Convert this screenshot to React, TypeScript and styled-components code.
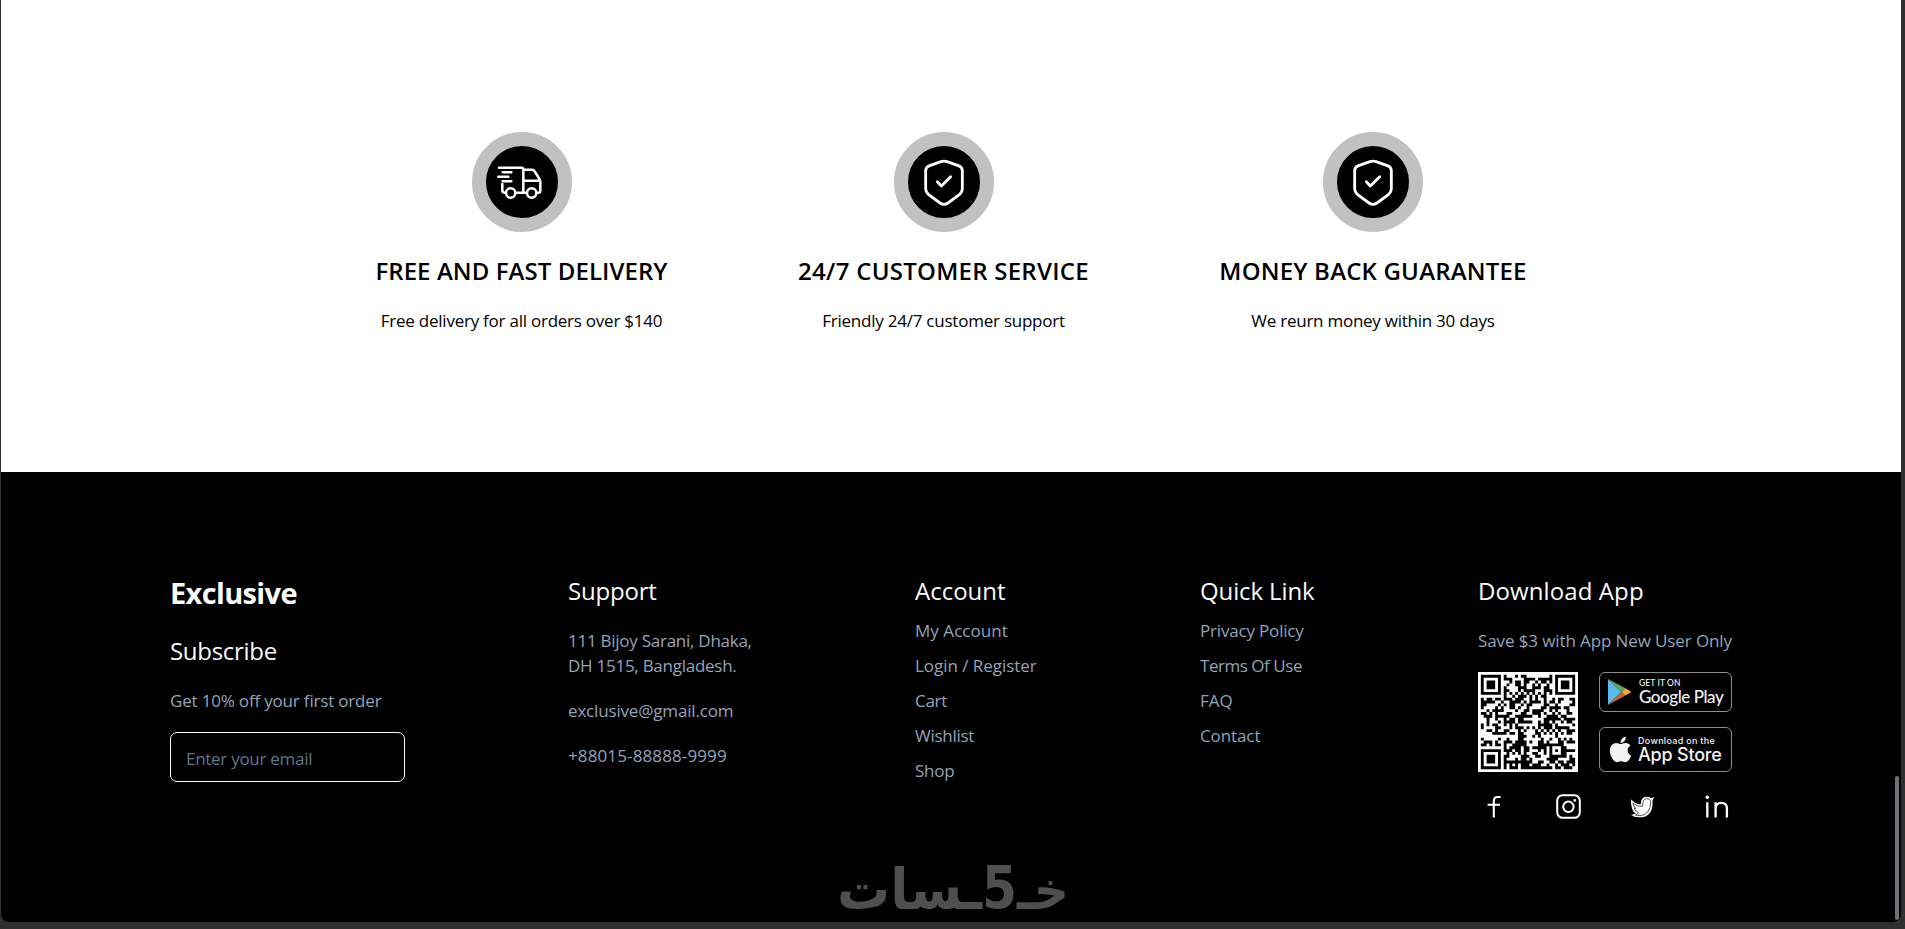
import React from "react";
import styled, { createGlobalStyle } from "styled-components";
import { FaApple } from "react-icons/fa";

const GlobalStyle = createGlobalStyle`
    * {
        box-sizing: border-box;
    }
    body {
        margin: 0;
        background-color: #2f2f2f;
        font-family: "Open Sans", "Noto Sans", sans-serif;
        overflow: hidden;
    }
    h2, h3, p, ul {
        margin: 0;
        padding: 0;
    }
`;

const Frame = styled.div`
    height: 929px;
    padding: 0 4px 7px 1px;
    background-color: #2f2f2f;
`;

const Page = styled.div`
    position: relative;
    height: 922px;
    display: flex;
    flex-direction: column;
    background-color: black;
    border-radius: 0 0 8px 8px;
    overflow: hidden;
`;

const Features = styled.section`
    height: 472px;
    padding-top: 132px;
    display: flex;
    justify-content: center;
    gap: 130px;
    background-color: white;
    color: black;
`;

const Feature = styled.article<{ $width: number }>`
    width: ${(props) => props.$width}px;
    display: flex;
    flex-direction: column;
    align-items: center;
`;

const Badge = styled.div`
    width: 100px;
    height: 100px;
    margin-bottom: 23px;
    display: flex;
    justify-content: center;
    align-items: center;
    border: 14px solid #c1c1c1;
    border-radius: 50%;
    background-color: black;
`;

interface TextProps {
    $tracking?: number;
}

const FeatureTitle = styled.h3<TextProps>`
    margin-bottom: 21px;
    font-size: 24px;
    line-height: 32px;
    font-weight: 600;
    white-space: nowrap;
    letter-spacing: ${(props) => props.$tracking ?? 0}px;
`;

const FeatureText = styled.p<TextProps>`
    font-size: 17px;
    line-height: 25px;
    white-space: nowrap;
    letter-spacing: ${(props) => props.$tracking ?? 0}px;
`;

const Footer = styled.footer`
    flex: 1;
    padding: 103px 169px 0;
    display: flex;
    justify-content: space-between;
    align-items: flex-start;
    color: #fafafa;
`;

const Column = styled.div<{ $width: number }>`
    width: ${(props) => props.$width}px;
    display: flex;
    flex-direction: column;
`;

const Brand = styled.h2`
    margin-bottom: 24px;
    font-size: 29px;
    line-height: 36px;
    font-weight: 700;
    letter-spacing: -0.65px;
`;

const Heading = styled.h3<TextProps>`
    font-size: 24px;
    line-height: 32px;
    font-weight: 400;
    white-space: nowrap;
    letter-spacing: ${(props) => props.$tracking ?? 0}px;
`;

const Text = styled.p<TextProps & { $top?: number }>`
    margin-top: ${(props) => props.$top ?? 0}px;
    color: #94a3b8;
    font-size: 17px;
    line-height: 25px;
    white-space: nowrap;
    letter-spacing: ${(props) => props.$tracking ?? 0}px;
`;

const EmailInput = styled.input`
    width: 235px;
    height: 50px;
    margin-top: 19px;
    padding: 2px 15px 0;
    border: 1px solid #fafafa;
    border-radius: 7px;
    background-color: transparent;
    color: #fafafa;
    font-family: inherit;
    font-size: 17px;
    letter-spacing: -0.28px;
    outline: none;
    &::placeholder {
        color: #64748b;
        opacity: 1;
    }
`;

const LinkList = styled.ul`
    margin-top: 11px;
    display: flex;
    flex-direction: column;
    gap: 10px;
    list-style: none;
`;

const AppRow = styled.div`
    height: 100px;
    margin-top: 19px;
    display: flex;
    justify-content: space-between;
`;

const Stores = styled.div`
    display: flex;
    flex-direction: column;
    justify-content: space-between;
`;

const Store = styled.div<{ $height: number; $indent: number }>`
    width: 133px;
    height: ${(props) => props.$height}px;
    padding-left: ${(props) => props.$indent}px;
    display: flex;
    align-items: center;
    border: 1px solid #8d8d8d;
    border-radius: 6px;
    background-color: black;
    color: #f2f2f2;
`;

const StoreIcon = styled.span`
    width: 32px;
    display: flex;
    align-items: center;
`;

const StoreLabel = styled.div<{ $font: string }>`
    display: flex;
    flex-direction: column;
    font-family: ${(props) => props.$font}, sans-serif;
    white-space: nowrap;
`;

const StoreText = styled.span<{ $size: number; $line: number; $tracking: number }>`
    font-size: ${(props) => props.$size}px;
    line-height: ${(props) => props.$line}px;
    font-weight: 500;
    letter-spacing: ${(props) => props.$tracking}px;
`;

const Socials = styled.div`
    margin-top: 22px;
    padding: 0 2px 0 3px;
    display: flex;
    justify-content: space-between;
    align-items: center;
`;

const Social = styled.span`
    width: 25px;
    height: 25px;
    display: flex;
    justify-content: center;
    align-items: center;
`;

const Watermark = styled.svg`
    position: absolute;
    left: 833px;
    top: 856px;
`;

const ScrollThumb = styled.div`
    position: absolute;
    right: 2px;
    top: 776px;
    width: 4px;
    height: 144px;
    border-radius: 2px;
    background-color: #6e7276;
`;

// the speed lines hang out on the left, so the body is nudged off centre
const TruckIcon = () => (
    <svg width="49" height="33" viewBox="412 136 147 99" fill="none" stroke="white" strokeWidth="7.5" strokeLinecap="round" strokeLinejoin="round">
        <path d="M418 141H485Q491 141 491 147V215" />
        <path d="M429 155H455M416 168.5H446M429 182H455" />
        <path d="M428 190V209Q428 216 435 216H438M468 216H501" />
        <path d="M492 147H517Q522 147 525 152L540 176Q542 180 542 184V210Q542 216 536 216H532M493 180H540" />
        <circle cx="453" cy="217" r="14" />
        <circle cx="516" cy="217" r="14" />
    </svg>
);

const ShieldIcon = () => (
    <svg width="40" height="47" viewBox="432 115 120 141" fill="none" stroke="white" strokeWidth="8.5" strokeLinecap="round" strokeLinejoin="round">
        <path d="M483 123L449 135Q437 139 437 151V205Q437 214 445 221L480 247Q492 255 504 247L539 221Q547 214 547 205V151Q547 139 535 135L501 123Q492 120 483 123Z" />
        <path d="M472 183L484 196L512 168" />
    </svg>
);

const PlayIcon = () => (
    <svg width="25" height="28" viewBox="0 0 25 28">
        <path d="M1 1V27L14.5 14Z" fill="#5cb8ea" />
        <path d="M1 1L18.5 10.2L14.5 14Z" fill="#62a763" />
        <path d="M1 27L18.5 17.6L14.5 14Z" fill="#c8642f" />
        <path d="M18.5 10.2L24.5 14L18.5 17.6L14.5 14Z" fill="#f2a43c" />
    </svg>
);

const FacebookIcon = () => (
    <svg width="14" height="23" viewBox="0 0 14 23" fill="none" stroke="white" strokeWidth="2.1">
        <path d="M6.8 22.5V6.2Q6.8 2 10.6 2H13.6M.6 9.8H13" />
    </svg>
);

const InstagramIcon = () => (
    <svg width="25" height="25" viewBox="0 0 25 25" fill="none" stroke="white" strokeWidth="2">
        <rect x="1.2" y="1.2" width="22.6" height="22.6" rx="5.5" />
        <circle cx="12.4" cy="12.8" r="5.2" />
        <circle cx="18.8" cy="6.4" r="1.4" fill="white" stroke="none" />
    </svg>
);

const TwitterIcon = () => (
    <svg width="25" height="22" viewBox="120 410 74 66">
        <path
            d="M123 420Q134 435 152 435Q151 413 170 412Q178 412 182 416L192 414L187 424Q190 474 147 474Q132 474 122 466Q132 466 137 462Q128 458 126 448Q121 437 123 420Z"
            fill="white"
        />
        <path
            d="M128 432Q140 442 158 441Q156 420 169 418Q178 417 182 425Q181 467 150 469Q141 469 136 467Q143 464 145 460Q135 456 132 446L137 447Q130 441 128 432Z"
            fill="none"
            stroke="black"
            strokeWidth="2"
        />
    </svg>
);

const LinkedinIcon = () => (
    <svg width="24" height="23" viewBox="0 0 24 23" fill="none" stroke="white" strokeWidth="2.3">
        <path d="M2.3 7.3V22.6M10.6 7.3V22.6M10.6 14Q10.6 7.9 16.4 7.9Q21.9 7.9 21.9 13.6V22.6" />
        <circle cx="2.3" cy="2.3" r="1.8" fill="white" stroke="none" />
    </svg>
);

const QR_SIZE = 33;

// finder patterns sit in three corners, each with a one-module light margin
const finderModule = (x: number, y: number): boolean | null => {
    const corners = [[0, 0], [QR_SIZE - 7, 0], [0, QR_SIZE - 7]];
    for (const [cx, cy] of corners) {
        const dx = Math.abs(x - cx - 3);
        const dy = Math.abs(y - cy - 3);
        const ring = Math.max(dx, dy);
        if (ring <= 4) return ring !== 4 && ring !== 2;
    }
    return null;
};

const buildQr = () => {
    let seed = 1515;
    let path = "";
    for (let y = 0; y < QR_SIZE; y++) {
        for (let x = 0; x < QR_SIZE; x++) {
            seed = (seed * 1103515245 + 12345) % 2147483648;
            let dark = (seed >> 16) % 100 < 51;
            if (x === 6) dark = y % 2 === 0;
            if (y === 6) dark = x % 2 === 0;
            const ring = Math.max(Math.abs(x - 26), Math.abs(y - 26));
            if (ring <= 2) dark = ring !== 1;
            const finder = finderModule(x, y);
            if (finder !== null) dark = finder;
            if (dark) path += `M${x + 1} ${y + 1}h1v1h-1z`;
        }
    }
    return path;
};

const QrCode = () => (
    <svg width="100" height="100" viewBox="0 0 35 35">
        <rect width="35" height="35" fill="white" />
        <path d={buildQr()} fill="black" />
    </svg>
);

interface LinkInterface {
    label: string,
    tracking: number
}

const features = [
    { title: "FREE AND FAST DELIVERY", text: "Free delivery for all orders over $140", width: 292, titleTracking: 0.08, textTracking: -0.24, icon: <TruckIcon /> },
    { title: "24/7 CUSTOMER SERVICE", text: "Friendly 24/7 customer support", width: 292, titleTracking: 0.26, textTracking: -0.23, icon: <ShieldIcon /> },
    { title: "MONEY BACK GUARANTEE", text: "We reurn money within 30 days", width: 307, titleTracking: 0.19, textTracking: -0.25, icon: <ShieldIcon /> },
];

const accountLinks: LinkInterface[] = [
    { label: "My Account", tracking: 0.05 },
    { label: "Login / Register", tracking: -0.04 },
    { label: "Cart", tracking: -0.29 },
    { label: "Wishlist", tracking: -0.28 },
    { label: "Shop", tracking: -0.2 },
];

const quickLinks: LinkInterface[] = [
    { label: "Privacy Policy", tracking: -0.18 },
    { label: "Terms Of Use", tracking: -0.46 },
    { label: "FAQ", tracking: 0 },
    { label: "Contact", tracking: -0.1 },
];

const Links = ({ items }: { items: LinkInterface[] }) => (
    <LinkList>
        {items.map((item) => (
            <li key={item.label}>
                <Text $tracking={item.tracking}>{item.label}</Text>
            </li>
        ))}
    </LinkList>
);

function App() {
    return (
        <Frame>
            <GlobalStyle />
            <Page>
                <Features>
                    {features.map((item) => (
                        <Feature key={item.title} $width={item.width}>
                            <Badge>{item.icon}</Badge>
                            <FeatureTitle $tracking={item.titleTracking}>{item.title}</FeatureTitle>
                            <FeatureText $tracking={item.textTracking}>{item.text}</FeatureText>
                        </Feature>
                    ))}
                </Features>
                <Footer>
                    <Column $width={235}>
                        <Brand>Exclusive</Brand>
                        <Heading $tracking={-0.3}>Subscribe</Heading>
                        <Text $top={21} $tracking={-0.18}>Get 10% off your first order</Text>
                        <EmailInput type="email" placeholder="Enter your email" />
                    </Column>
                    <Column $width={184}>
                        <Heading $tracking={-0.2}>Support</Heading>
                        <Text $top={21} $tracking={-0.26}>111 Bijoy Sarani, Dhaka,<br />DH 1515, Bangladesh.</Text>
                        <Text $top={20} $tracking={-0.17}>exclusive@gmail.com</Text>
                        <Text $top={20} $tracking={0.12}>+88015-88888-9999</Text>
                    </Column>
                    <Column $width={122}>
                        <Heading>Account</Heading>
                        <Links items={accountLinks} />
                    </Column>
                    <Column $width={115}>
                        <Heading $tracking={-0.12}>Quick Link</Heading>
                        <Links items={quickLinks} />
                    </Column>
                    <Column $width={254}>
                        <Heading $tracking={0.1}>Download App</Heading>
                        <Text $top={21} $tracking={-0.11}>Save $3 with App New User Only</Text>
                        <AppRow>
                            <QrCode />
                            <Stores>
                                <Store $height={40} $indent={7}>
                                    <StoreIcon><PlayIcon /></StoreIcon>
                                    <StoreLabel $font="Lato">
                                        <StoreText $size={8.5} $line={10} $tracking={0.1}>GET IT ON</StoreText>
                                        <StoreText $size={17} $line={18} $tracking={-0.45}>Google Play</StoreText>
                                    </StoreLabel>
                                </Store>
                                <Store $height={45} $indent={6}>
                                    <StoreIcon><FaApple size={29} /></StoreIcon>
                                    <StoreLabel $font="Inter">
                                        <StoreText $size={9} $line={11} $tracking={0.3}>Download on the</StoreText>
                                        <StoreText $size={18} $line={18} $tracking={-0.2}>App Store</StoreText>
                                    </StoreLabel>
                                </Store>
                            </Stores>
                        </AppRow>
                        <Socials>
                            <Social><FacebookIcon /></Social>
                            <Social><InstagramIcon /></Social>
                            <Social><TwitterIcon /></Social>
                            <Social><LinkedinIcon /></Social>
                        </Socials>
                    </Column>
                </Footer>
                <Watermark width="240" height="66" viewBox="0 0 240 66" fill="#4f4f4f" fontFamily="DejaVu Sans" fontWeight="700" fontSize="38">
                    <text transform="translate(3 53) scale(1 1.5)" textLength="145" lengthAdjust="spacingAndGlyphs">ـسات</text>
                    <text x="148" y="52" fontSize="58" textLength="35" lengthAdjust="spacingAndGlyphs">5</text>
                    <text transform="translate(183 53) scale(1 1.4)" textLength="52" lengthAdjust="spacingAndGlyphs">خـ</text>
                </Watermark>
                <ScrollThumb />
            </Page>
        </Frame>
    );
}

export default App;
